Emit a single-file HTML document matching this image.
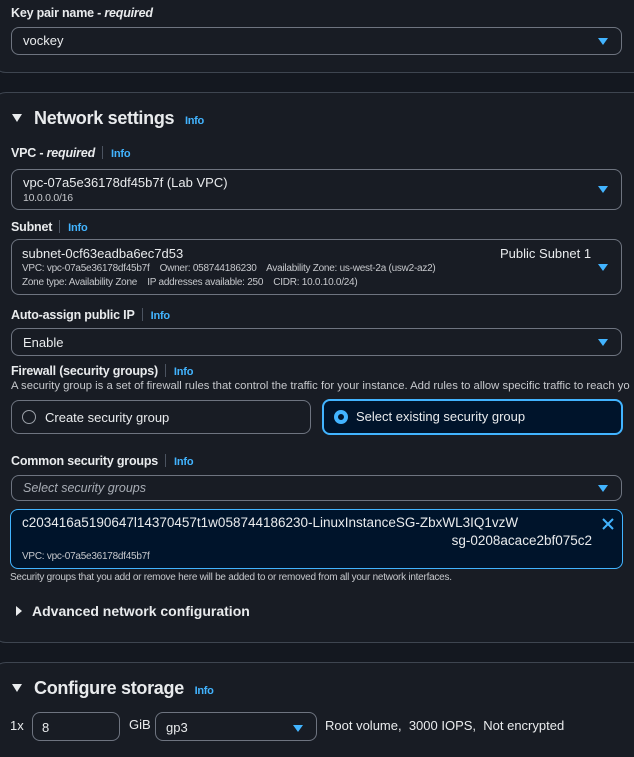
<!DOCTYPE html><html><head><style>
*{box-sizing:border-box;margin:0;padding:0}
body{width:634px;height:757px;background:#141820;font-family:"Liberation Sans",sans-serif;color:#e9ebed;overflow:hidden;font-size:13px}
#w{position:relative;width:634px;height:757px;overflow:hidden}
.a{position:absolute;white-space:nowrap}
.card{position:absolute;left:-8px;width:660px;background:#181c24;border:1px solid #3e4550;border-radius:14px}
.lbl{font-weight:bold;font-size:12.5px;letter-spacing:-0.2px}
.lbl i{font-style:italic}
.info{color:#42b4ff;font-weight:bold;font-size:11px}
.sep{display:inline-block;width:1px;height:13px;background:#4b5360;vertical-align:-2px;margin:0 8px 0 7px}
.in{position:absolute;left:11px;width:611px;border:1px solid #6e7480;border-radius:8px;background:#181c24}
.car{position:absolute;right:13px;width:0;height:0;border-left:5px solid transparent;border-right:5px solid transparent;border-top:7px solid #42b4ff}
.sm{font-size:10px;color:#c6c8cc;letter-spacing:-0.25px}
.h{font-size:18px;font-weight:bold;letter-spacing:-0.3px}
.tri{display:inline-block;width:0;height:0;border-left:5px solid transparent;border-right:5px solid transparent;border-top:8px solid #e9ebed;margin-right:12px;vertical-align:2px}
</style></head><body><div id="w">
<div class="card" style="top:-20px;height:93px"></div>
<div class="card" style="top:92px;height:551px"></div>
<div class="card" style="top:662px;height:120px"></div>

<div class="a lbl" style="left:11px;top:6px">Key pair name - <i>required</i></div>
<div class="in" style="top:27px;height:28px"><span class="a" style="left:11px;top:5px;font-size:13px">vockey</span><div class="car" style="top:10px"></div></div>

<div class="a h" style="left:12px;top:108px"><span class="tri"></span>Network settings <span class="info" style="margin-left:6px">Info</span></div>

<div class="a lbl" style="left:11px;top:146px">VPC - <i>required</i><span class="sep"></span><span class="info">Info</span></div>
<div class="in" style="top:169px;height:41px"><span class="a" style="left:11px;top:5px">vpc-07a5e36178df45b7f (Lab VPC)</span><span class="a sm" style="left:11px;top:22px;font-size:10.5px">10.0.0.0/16</span><div class="car" style="top:16px"></div></div>

<div class="a lbl" style="left:11px;top:220px">Subnet<span class="sep"></span><span class="info">Info</span></div>
<div class="in" style="top:239px;height:56px"><span class="a" style="left:10px;top:6px">subnet-0cf63eadba6ec7d53</span><span class="a" style="left:488px;top:6px">Public Subnet 1</span>
<span class="a sm" style="left:10px;top:23px">VPC: vpc-07a5e36178df45b7f &nbsp;&nbsp; Owner: 058744186230 &nbsp;&nbsp; Availability Zone: us-west-2a (usw2-az2)</span>
<span class="a sm" style="left:10px;top:37px">Zone type: Availability Zone &nbsp;&nbsp; IP addresses available: 250 &nbsp;&nbsp; CIDR: 10.0.10.0/24)</span><div class="car" style="top:24px"></div></div>

<div class="a lbl" style="left:11px;top:308px">Auto-assign public IP<span class="sep"></span><span class="info">Info</span></div>
<div class="in" style="top:328px;height:28px"><span class="a" style="left:11px;top:6px">Enable</span><div class="car" style="top:10px"></div></div>

<div class="a lbl" style="left:11px;top:364px">Firewall (security groups)<span class="sep"></span><span class="info">Info</span></div>
<div class="a" style="left:11px;top:380px;width:623px;overflow:hidden;font-size:11.3px;color:#c6c8cc">A security group is a set of firewall rules that control the traffic for your instance. Add rules to allow specific traffic to reach yo</div>
<div class="a" style="left:11px;top:400px;width:300px;height:34px;border:1px solid #6e7480;border-radius:8px"><span class="a" style="left:10px;top:9px;width:14px;height:14px;border:1px solid #9ba0a8;border-radius:50%"></span><span class="a" style="left:33px;top:9px">Create security group</span></div>
<div class="a" style="left:322px;top:399px;width:301px;height:36px;border:2px solid #42b4ff;border-radius:8px;background:#00142b"><span class="a" style="left:10px;top:9px;width:14px;height:14px;border:4px solid #42b4ff;border-radius:50%;background:#00142b"></span><span class="a" style="left:32px;top:8px">Select existing security group</span></div>

<div class="a lbl" style="left:11px;top:454px">Common security groups<span class="sep"></span><span class="info">Info</span></div>
<div class="in" style="top:475px;height:26px"><span class="a" style="left:11px;top:5px;font-style:italic;color:#a8adb5;font-size:12.5px">Select security groups</span><div class="car" style="top:9px"></div></div>

<div class="a" style="left:10px;top:509px;width:613px;height:60px;border:1px solid #42b4ff;border-radius:8px;background:#00142b">
<span class="a" style="left:11px;top:5px;font-size:13.5px">c203416a5190647l14370457t1w058744186230-LinuxInstanceSG-ZbxWL3IQ1vzW</span>
<span class="a" style="right:30px;top:23px;font-size:13.5px">sg-0208acace2bf075c2</span>
<span class="a sm" style="left:11px;top:41px">VPC: vpc-07a5e36178df45b7f</span>
<svg class="a" style="left:590px;top:7px" width="14" height="14" viewBox="0 0 14 14"><path d="M2 2L12 12M12 2L2 12" stroke="#42b4ff" stroke-width="2"/></svg></div>
<div class="a sm" style="left:10px;top:572px">Security groups that you add or remove here will be added to or removed from all your network interfaces.</div>

<div class="a" style="left:16px;top:603px;font-weight:bold;font-size:14px"><span style="display:inline-block;width:0;height:0;border-top:5px solid transparent;border-bottom:5px solid transparent;border-left:6px solid #e9ebed;margin-right:10px"></span>Advanced network configuration</div>

<div class="a h" style="left:12px;top:678px"><span class="tri"></span>Configure storage <span class="info" style="margin-left:6px">Info</span></div>
<div class="a" style="left:10px;top:718px;font-size:13px">1x</div>
<div class="a" style="left:32px;top:712px;width:88px;height:29px;border:1px solid #6e7480;border-radius:8px"><span class="a" style="left:9px;top:7px">8</span></div>
<div class="a" style="left:129px;top:717px">GiB</div>
<div class="a" style="left:155px;top:712px;width:162px;height:29px;border:1px solid #6e7480;border-radius:8px"><span class="a" style="left:10px;top:7px">gp3</span><div class="car" style="top:12px;right:13px"></div></div>
<div class="a" style="left:325px;top:718px">Root volume, &nbsp;3000 IOPS, &nbsp;Not encrypted</div>
</div></body></html>
